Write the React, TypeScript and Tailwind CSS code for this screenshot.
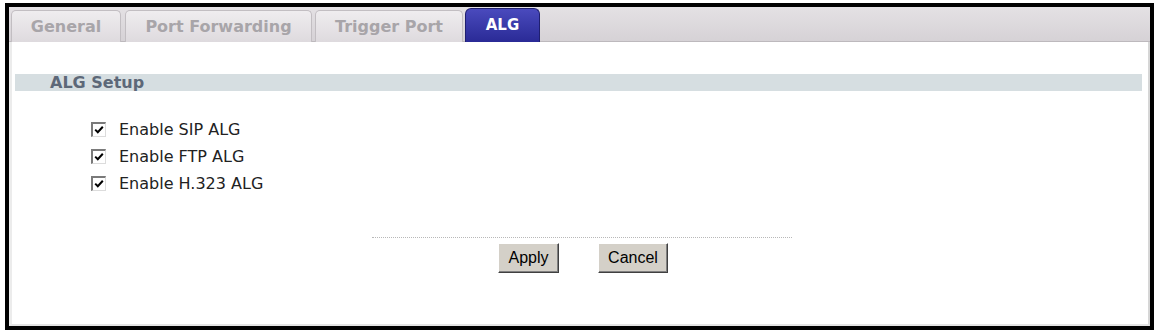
import React from 'react';

const verdana = { fontFamily: '"DejaVu Sans", Verdana, sans-serif' };

function Tab({ label, active, w }: { label: string; active?: boolean; w: string }) {
  if (active) {
    return (
      <div
        className={`${w} h-[34px] mt-[1px] rounded-t-[6px] border border-b-0 border-[#1f1f70] bg-linear-to-b from-[#4a4abd] to-[#2a2a96] flex items-center justify-center text-white font-bold text-[15px]`}
      >
        {label}
      </div>
    );
  }
  return (
    <div
      className={`${w} h-[32px] mt-[3px] rounded-t-[5px] border border-b-0 border-[#c2bec2] bg-linear-to-b from-[#efedef] to-[#dedade] flex items-center justify-center text-[#a8a5a9] font-bold text-[16px]`}
    >
      {label}
    </div>
  );
}

function Check({ label }: { label: string }) {
  return (
    <div className="flex items-center h-[27px]">
      <div className="w-[15px] h-[15px] border-t-2 border-l-2 border-[#7a7a7a] border-b border-r border-b-[#dcdcdc] border-r-[#dcdcdc] bg-white flex items-center justify-center">
        <svg width="10" height="10" viewBox="0 0 10 10">
          <path d="M1.2 4.6 L3.8 7.2 L8.8 1.8" stroke="#000" strokeWidth="2" fill="none" />
        </svg>
      </div>
      <span className="ml-[13px] text-[16px] text-[#222]">{label}</span>
    </div>
  );
}

function Btn({ label, w }: { label: string; w: string }) {
  return (
    <button
      className={`${w} h-[30px] bg-[#d4d0c8] border border-t-white border-l-white border-b-[#404040] border-r-[#404040] shadow-[inset_-1px_-1px_0_#808080] text-[16px] text-black`}
      style={{ fontFamily: '"Liberation Sans", Arial, sans-serif' }}
    >
      {label}
    </button>
  );
}

export default function App() {
  return (
    <div className="w-[1159px] h-[331px] bg-white pt-[3px] pl-[5px]" style={verdana}>
      <div className="w-[1149px] h-[327px] border-4 border-black flex flex-col">
        {/* tab strip */}
        <div className="h-[35px] bg-linear-to-b from-[#e4e1e4] to-[#d6d2d6] border-b border-[#bdb9bd] flex items-start pl-[2px]">
          <Tab label="General" w="w-[110px]" />
          <div className="w-[4px]" />
          <Tab label="Port Forwarding" w="w-[187px]" />
          <div className="w-[3px]" />
          <Tab label="Trigger Port" w="w-[148px]" />
          <div className="w-[2px]" />
          <Tab label="ALG" active w="w-[75px]" />
        </div>

        {/* content */}
        <div className="flex-1 bg-white border-l-[3px] border-l-[#ececec] border-r-2 border-r-[#d6d6d6] border-b-2 border-b-[#e4e4e4] pt-[32px]">
          <div className="ml-[3px] mr-[6px] h-[17px] bg-[#d6dee1] flex items-center pl-[35px]">
            <span className="text-[16px] font-bold text-[#5d6878]">ALG Setup</span>
          </div>

          <div className="pl-[79px] pt-[25px] flex flex-col">
            <Check label="Enable SIP ALG" />
            <Check label="Enable FTP ALG" />
            <Check label="Enable H.323 ALG" />
          </div>

          <div className="flex flex-col items-center pt-[40px] pr-[6px]">
            <div className="w-[420px] border-t border-dotted border-[#b8b8b8] ml-[10px]" />
            <div className="flex gap-[39px] mt-[5px] ml-[12px]">
              <Btn label="Apply" w="w-[61px]" />
              <Btn label="Cancel" w="w-[70px]" />
            </div>
          </div>
        </div>
      </div>
    </div>
  );
}
